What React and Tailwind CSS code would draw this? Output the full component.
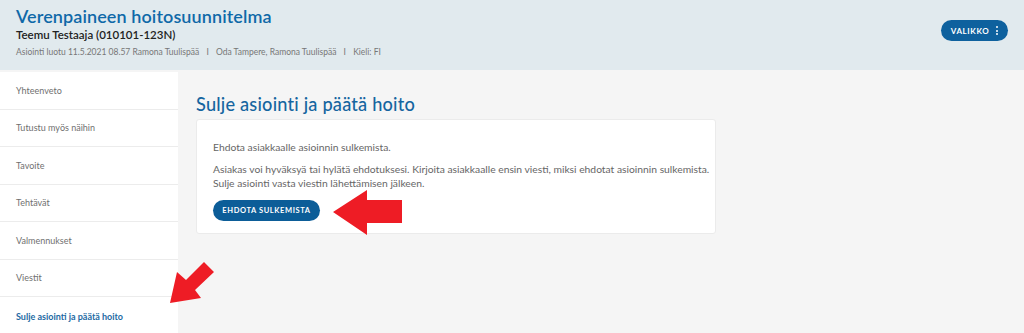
import React from "react";

const items = [
  "Yhteenveto",
  "Tutustu myös näihin",
  "Tavoite",
  "Tehtävät",
  "Valmennukset",
  "Viestit",
];

function LeftArrow() {
  return (
    <svg width="72" height="50" viewBox="0 0 72 50" className="absolute left-[332px] top-[189px]">
      <polygon points="1,23 35,1 35,11 70,11 70,34 35,34 35,46" fill="#ee1c25" />
    </svg>
  );
}

function DiagArrow() {
  return (
    <svg width="52" height="48" viewBox="0 0 52 48" className="absolute left-[166px] top-[258px]">
      <polygon points="4,45 11,14 20,22 38,4 48,14 29,32 35,40" fill="#ee1c25" />
    </svg>
  );
}

export default function App() {
  return (
    <div
      className="relative w-[1024px] h-[333px] overflow-hidden bg-[#f5f5f5]"
      style={{ fontFamily: "Lato, 'Open Sans', sans-serif" }}
    >
      <header className="h-[70px] bg-[#e1eaee] flex items-start justify-between px-4">
        <div className="pt-[4px]">
          <h1 className="text-[18px] leading-[24px] font-semibold text-[#0f69a8] tracking-[0.1px]">
            Verenpaineen hoitosuunnitelma
          </h1>
          <div className="text-[11.5px] leading-[15px] font-semibold text-[#222] mt-[-1px]">
            Teemu Testaaja (010101-123N)
          </div>
          <div className="text-[8.5px] leading-[12px] text-[#777] mt-[4px]">
            Asiointi luotu 11.5.2021 08.57 Ramona Tuulispää <span className="mx-[5px]">I</span> Oda Tampere, Ramona Tuulispää <span className="mx-[5px]">I</span> Kieli: FI
          </div>
        </div>
        <button className="mt-[20px] h-[21px] w-[67px] rounded-full bg-[#0e619e] text-white text-[8px] font-bold tracking-[0.6px] flex items-center justify-center gap-[7px]">
          VALIKKO
          <span className="flex flex-col gap-[1.5px]">
            <span className="w-[2px] h-[2px] bg-white rounded-full" />
            <span className="w-[2px] h-[2px] bg-white rounded-full" />
            <span className="w-[2px] h-[2px] bg-white rounded-full" />
          </span>
        </button>
      </header>
      <div className="flex h-[263px] mt-[2px]">
        <nav className="w-[178px] bg-white flex flex-col">
          {items.map((t) => (
            <div
              key={t}
              className="h-[37.6px] flex items-center px-4 text-[9px] text-[#707070] border-b border-[#ececec]"
            >
              {t}
            </div>
          ))}
          <div className="h-[37.6px] flex items-center px-4 text-[9px] font-bold text-[#1d6aa3]">
            Sulje asiointi ja päätä hoito
          </div>
        </nav>
        <main className="flex-1 pl-[18px] pt-[20px]">
          <h2 className="text-[18.2px] leading-[24px] text-[#1565a0] font-medium tracking-[0.2px]">
            Sulje asiointi ja päätä hoito
          </h2>
          <div className="mt-[3px] w-[520px] h-[115px] bg-white border border-[#ebebeb] rounded-[3px] pl-4 pr-[4px] pt-[20px]">
            <p className="text-[10.3px] leading-[14px] text-[#666]">
              Ehdota asiakkaalle asioinnin sulkemista.
            </p>
            <p className="text-[10.3px] leading-[14px] text-[#666] mt-[8px] w-[498px]">
              Asiakas voi hyväksyä tai hylätä ehdotuksesi. Kirjoita asiakkaalle ensin viesti, miksi ehdotat asioinnin sulkemista. Sulje asiointi vasta viestin lähettämisen jälkeen.
            </p>
            <button className="mt-[10px] h-[21px] w-[107px] rounded-full bg-[#0c5d98] text-white text-[7.5px] font-bold tracking-[0.6px]">
              EHDOTA SULKEMISTA
            </button>
          </div>
        </main>
      </div>
      <LeftArrow />
      <DiagArrow />
    </div>
  );
}
